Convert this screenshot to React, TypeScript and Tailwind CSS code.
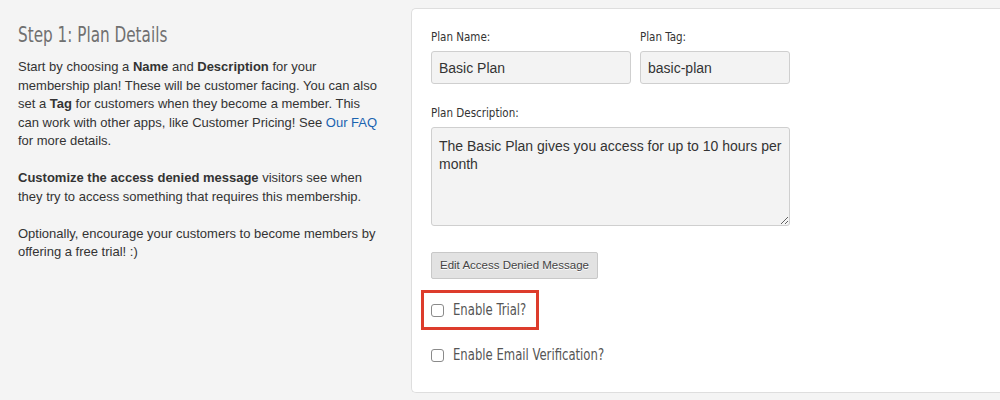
import React from "react";

const narrow = {
  fontFamily: '"Liberation Sans Narrow", "DejaVu Sans Condensed", "Roboto", sans-serif',
};

const Field = ({ label, children, className = "" }: { label: string; children: React.ReactNode; className?: string }) => (
  <div className={className}>
    <label className="block text-[12.5px] leading-[14px] text-[#333] mb-[7px]" style={narrow}>
      <span className="inline-block origin-left scale-x-[0.92] whitespace-nowrap">{label}</span>
    </label>
    {children}
  </div>
);

const Check = ({ label }: { label: string }) => (
  <label className="flex items-center gap-[9px] text-[16px] leading-[20px] text-[#555] whitespace-nowrap" style={narrow}>
    <span className="shrink-0 w-[13px] h-[13px] rounded-[3px] border border-[#8a8a8a] bg-white" />
    <span className="inline-block origin-left scale-x-[0.81]">{label}</span>
  </label>
);

export default function App() {
  return (
    <div
      className="w-[1000px] h-[400px] bg-[#f4f4f4] flex overflow-hidden"
      style={{ fontFamily: '"Liberation Sans", Arial, sans-serif' }}
    >
      {/* left column: explanation */}
      <div className="w-[411px] pl-[18px] pr-[20px] pt-[22px]">
        <h2 className="text-[22px] leading-[26px] text-[#707070] mb-[10px] whitespace-nowrap" style={narrow}>
          <span className="inline-block origin-left scale-x-[0.77]">Step 1: Plan Details</span>
        </h2>
        <div className="text-[13px] leading-[18.5px] text-[#333] w-[360px]">
          <p>
            Start by choosing a <b>Name</b> and <b>Description</b> for your membership plan! These will be
            customer facing. You can also set a <b>Tag</b> for customers when they become a member. This can
            work with other apps, like Customer Pricing! See{" "}
            <a className="text-[#1a63b0]" href="#">
              Our FAQ
            </a>{" "}
            for more details.
          </p>
          <p className="mt-[18.5px]">
            <b>Customize the access denied message</b> visitors see when they try to access something that
            requires this membership.
          </p>
          <p className="mt-[18.5px]">
            Optionally, encourage your customers to become members by offering a free trial! :)
          </p>
        </div>
      </div>

      {/* right column: form card */}
      <div className="flex-1 mt-[8px] h-[385px] bg-white border border-[#dedede] border-r-0 rounded-l-[5px] pl-[19px] pt-[21px]">
        <div className="flex gap-[9px]">
          <Field label="Plan Name:">
            <input
              readOnly
              value="Basic Plan"
              className="w-[200px] h-[33px] px-[7px] text-[14px] text-[#333] bg-[#f3f3f3] border border-[#cfcfcf] rounded-[3px] outline-none"
            />
          </Field>
          <Field label="Plan Tag:">
            <input
              readOnly
              value="basic-plan"
              className="w-[150px] h-[33px] px-[7px] text-[14px] text-[#333] bg-[#f3f3f3] border border-[#cfcfcf] rounded-[3px] outline-none"
            />
          </Field>
        </div>

        <Field label="Plan Description:" className="mt-[22px]">
          <textarea
            readOnly
            value="The Basic Plan gives you access for up to 10 hours per month"
            className="block w-[359px] h-[99px] px-[7px] pt-[9px] pb-[5px] text-[14px] leading-[18px] text-[#333] bg-[#f3f3f3] border border-[#cfcfcf] rounded-[3px] outline-none resize-y"
          />
        </Field>

        <button className="mt-[26px] h-[27px] px-[8px] text-[11.5px] text-[#444] bg-[#e2e2e2] border border-[#c8c8c8] rounded-[2px] [text-shadow:0_1px_0_#fff]">
          Edit Access Denied Message
        </button>

        <div className="mt-[11px] -ml-[10px] w-[118px] h-[40px] border-[3px] border-[#dd3c2c] flex items-center pl-[7px]">
          <Check label="Enable Trial?" />
        </div>

        <div className="mt-[15px]">
          <Check label="Enable Email Verification?" />
        </div>
      </div>
    </div>
  );
}
